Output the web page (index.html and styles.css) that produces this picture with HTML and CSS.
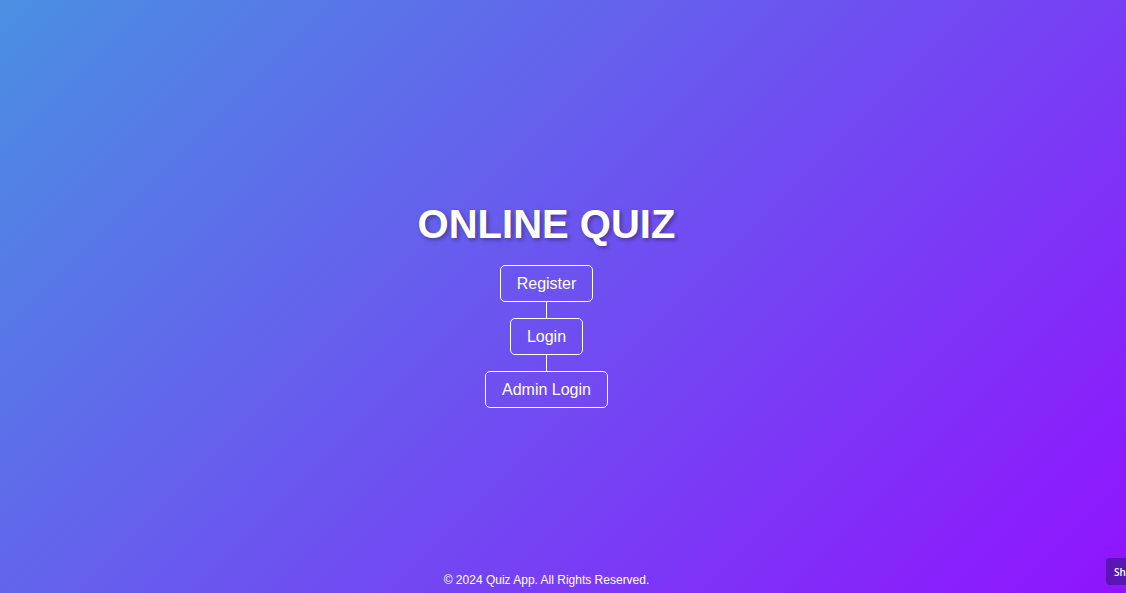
FILE: index.html
```html
<!DOCTYPE html>
<html lang="en">
<head>
<meta charset="utf-8">
<title>Online Quiz</title>
<link rel="stylesheet" href="styles.css">
</head>
<body>
<main class="main">
  <h1 class="title">ONLINE QUIZ</h1>
  <ul class="menu">
    <li class="menu-item"><a class="btn" href="#">Register</a></li>
    <li class="menu-item"><a class="btn" href="#">Login</a></li>
    <li class="menu-item"><a class="btn" href="#">Admin Login</a></li>
  </ul>
</main>
<footer class="footer">© 2024 Quiz App. All Rights Reserved.</footer>
<button class="side-btn" type="button">Sh</button>
</body>
</html>
```

FILE: styles.css
```css
html, body {
  margin: 0;
  padding: 0;
  height: 100%;
}
body {
  font-family: "Liberation Sans", Arial, sans-serif;
  color: #fff;
  background: linear-gradient(135deg, #4a90e2 0%, #9013fe 100%);
  display: flex;
  flex-direction: column;
  min-height: 100vh;
  overflow: hidden;
  padding-right: 33px;
  box-sizing: border-box;
}
.main {
  flex: 1;
  display: flex;
  flex-direction: column;
  align-items: center;
  padding-top: 201px;
}
.title {
  margin: 0 0 18px;
  font-size: 40px;
  font-weight: bold;
  line-height: 46px;
  text-shadow: 2px 2px 4px rgba(0, 0, 0, 0.35);
}
.menu {
  list-style: none;
  margin: 0;
  padding: 0;
  display: flex;
  flex-direction: column;
  align-items: center;
}
.menu-item {
  display: flex;
  flex-direction: column;
  align-items: center;
}
.menu-item + .menu-item::before {
  content: "";
  display: block;
  width: 1px;
  height: 16px;
  background: #fff;
}
.btn {
  display: block;
  color: #fff;
  text-decoration: none;
  font-size: 16px;
  line-height: 19px;
  padding: 8px 16px;
  border: 1px solid #fff;
  border-radius: 5px;
}
.footer {
  text-align: center;
  font-size: 12px;
  line-height: 14px;
  padding: 0 0 6px;
}
.side-btn {
  position: fixed;
  right: 0;
  top: 558px;
  width: 20px;
  height: 27px;
  padding: 0 0 0 8px;
  text-align: left;
  overflow: hidden;
  white-space: nowrap;
  border: none;
  border-radius: 4px 0 0 4px;
  background: #5a16b5;
  color: #fff;
  font-family: "Open Sans", sans-serif;
  font-size: 10px;
  font-weight: 600;
}
```
